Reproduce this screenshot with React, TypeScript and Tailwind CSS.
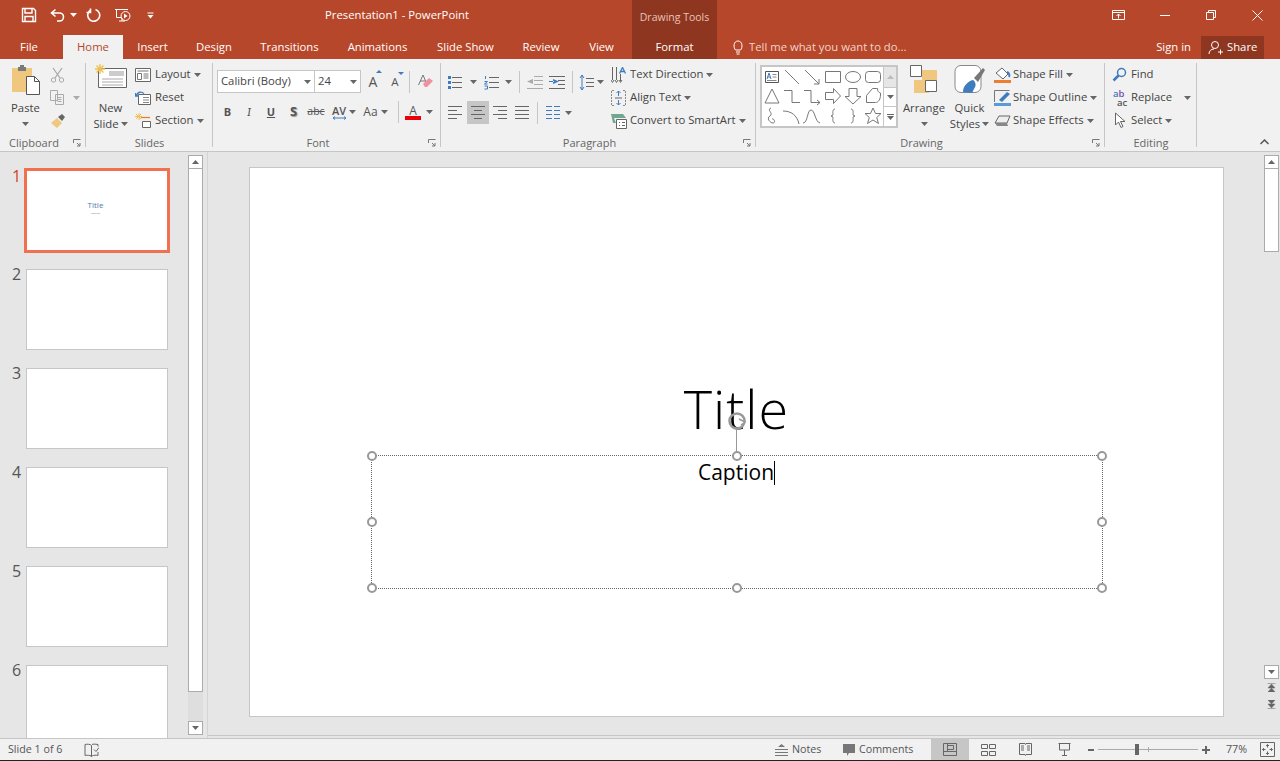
import React from "react";

type P = { children?: React.ReactNode; w?: number; h?: number; className?: string };
const Ico = ({ children, w = 16, h = 16, className = "" }: P) => (
  <svg width={w} height={h} viewBox={`0 0 ${w} ${h}`} fill="none" stroke="#666" strokeWidth={1} className={`shrink-0 block ${className}`}>
    {children}
  </svg>
);
const Caret = ({ className = "", color = "#666" }: { className?: string; color?: string }) => (
  <svg width={7} height={4} viewBox="0 0 7 4" className={`shrink-0 inline-block ${className}`}><path d="M0 0h7L3.5 4z" fill={color} /></svg>
);

const tabs: [string, string][] = [
  ["Insert", "w-[59px]"], ["Design", "w-[64px]"], ["Transitions", "w-[87px]"], ["Animations", "w-[89px]"],
  ["Slide Show", "w-[87px]"], ["Review", "w-[64px]"], ["View", "w-[57px]"],
];

function Header() {
  return (
    <div className="grid grid-cols-[632px_85px_1fr] grid-rows-[35px_24px] bg-[#b7472a] text-white text-[11.3px] leading-none">
      <div className="flex items-center pb-[5px]">
        <Ico w={16} h={16} className="ml-[21px]">
          <path d="M1.5 1.5h11l2 2v11h-13z" stroke="#fff" strokeWidth={1.4} /><path d="M4 2v4h7V2M4 14V9.5h8V14" stroke="#fff" strokeWidth={1.4} />
        </Ico>
        <Ico w={16} h={14} className="ml-[13px]">
          <path d="M5.5 1.5L1.5 5l4 3.5M2 5h7.5a4 4 0 0 1 0 8H7" stroke="#fff" strokeWidth={1.6} />
        </Ico>
        <Caret color="#fff" className="ml-[4px]" />
        <Ico w={15} h={14} className="ml-[9px]">
          <path d="M9.5 1.5A6 6 0 1 1 4 2.5M4.5 0.5v4h-4" stroke="#fff" strokeWidth={1.6} />
        </Ico>
        <Ico w={18} h={18} className="ml-[13px] mt-[3px]">
          <path d="M1 1.5h13M2.5 2v7.5h5M5 13h6M8 10v3" stroke="#fff" /><circle cx={11.5} cy={8} r={4.5} stroke="#fff" /><path d="M10 5.5v5l3.5-2.5z" fill="#fff" stroke="none" />
        </Ico>
        <Ico w={7} h={7} className="ml-[15px]">
          <path d="M0.5 1h6" stroke="#fff" /><path d="M0.5 3h6L3.5 6.5z" fill="#fff" stroke="none" />
        </Ico>
        <span className="ml-[171px] whitespace-nowrap">Presentation1 - PowerPoint</span>
      </div>
      <div className="row-span-2 bg-[#8f3620] flex flex-col items-center">
        <div className="h-[35px] flex items-center pb-[1px] text-[10.5px] text-[#e8c4b8]">Drawing Tools</div>
        <div className="h-[24px] flex items-center">Format</div>
      </div>
      <div className="flex items-start justify-end">
        <div className="w-[46px] h-[30px] flex items-center justify-center">
          <Ico w={14} h={11}><path d="M.5.5h12v9H.5zM.5 2.5h12M6.5 8.5V4M4.5 6l2-2 2 2" stroke="#fff" /></Ico>
        </div>
        <div className="w-[46px] h-[30px] flex items-center justify-center"><div className="w-[10px] h-px bg-white" /></div>
        <div className="w-[46px] h-[30px] flex items-center justify-center">
          <Ico w={10} h={10}><path d="M.5 2.5h7v7h-7zM2.5 2.5v-2h7v7h-2" stroke="#fff" /></Ico>
        </div>
        <div className="w-[46px] h-[30px] flex items-center justify-center">
          <Ico w={11} h={11}><path d="M.5.5l10 10M10.5.5l-10 10" stroke="#fff" /></Ico>
        </div>
      </div>
      <div className="flex items-center">
        <div className="w-[58px] text-center">File</div>
        <div className="ml-[5px] w-[60px] h-full bg-[#f1f1f1] text-[#b7472a] flex items-center justify-center">Home</div>
        {tabs.map(([t, w]) => <div key={t} className={`${w} text-center`}>{t}</div>)}
      </div>
      <div className="flex items-center">
        <Ico w={12} h={15} className="ml-[15px]">
          <path d="M3.5 10C1 7.5 1.500 1 6 1s5 6.500 2.500 9zM4 12h4M4.500 14h3" stroke="#fff" />
        </Ico>
        <span className="ml-[5px] text-[#f0d5cc] whitespace-nowrap">Tell me what you want to do...</span>
        <span className="ml-auto whitespace-nowrap">Sign in</span>
        <div className="ml-[10px] mr-[16px] w-[63px] h-[23px] bg-[#8f3620] flex items-center pl-[7px]">
          <Ico w={15} h={15}><circle cx={7} cy={5} r={3.500} stroke="#fff" /><path d="M1 14c0-3 2-5 5-5M10 12h5M12.500 9.500v5" stroke="#fff" /></Ico>
          <span className="ml-[4px]">Share</span>
        </div>
      </div>
    </div>
  );
}

const Group = ({ w, label, launcher, children }: { w: string; label: string; launcher?: boolean; children: React.ReactNode }) => (
  <div className={`${w} relative shrink-0 flex flex-col`}>
    <div className="h-[77px] flex pt-[4px]">{children}</div>
    <div className={`h-[15px] flex items-center justify-center text-[#666] text-[11px] ${launcher ? "pr-[18px]" : ""}`}>{label}</div>
    <div className="absolute right-0 top-[4px] bottom-[4px] w-px bg-[#c6c6c6]" />
    {launcher && (
      <div className="absolute right-[5px] bottom-[4px]">
        <Ico w={8} h={8}><path d="M.5 4V.5H7.500M4 4l3 3M4 7h3V4" stroke="#777" /></Ico>
      </div>
    )}
  </div>
);

const Row = ({ icon, label, caret = true, gap = 4, caretClass = "ml-[3px]" }: { icon: React.ReactNode; label: string; caret?: boolean; gap?: number; caretClass?: string }) => (
  <div className="h-[23px] flex items-center whitespace-nowrap">
    {icon}
    <span style={{ marginLeft: gap }}>{label}</span>
    {caret && <Caret className={caretClass} />}
  </div>
);

function Clipboard() {
  return (
    <Group w="w-[86px]" label="Clipboard" launcher>
      <div className="w-[50px] flex flex-col items-center pl-[1px]">
        <Ico w={30} h={32} className="mt-[1px]">
          <path d="M1 4h20v24H1z" fill="#efc77f" stroke="none" />
          <path d="M7 3h8v4H7z" fill="#7a7a7a" stroke="none" /><path d="M9 1h4v3H9z" fill="#7a7a7a" stroke="none" />
          <path d="M15.500 12.500h8l5 5v13h-13z" fill="#fff" stroke="#555" /><path d="M23.500 12.500v5h5" stroke="#555" />
        </Ico>
        <div className="mt-[4px] leading-[16px]">Paste</div>
        <Caret className="mt-[6px]" />
      </div>
      <div className="flex flex-col">
        <div className="h-[23px] flex items-center">
          <Ico w={15} h={16}><path d="M3 1l7 10M12 1L5 11" stroke="#aaa" strokeWidth={1.300} /><circle cx={3.500} cy={13} r={2.200} stroke="#aaa" /><circle cx={11.500} cy={13} r={2.200} stroke="#aaa" /></Ico>
        </div>
        <div className="h-[23px] flex items-center">
          <Ico w={15} h={15}><path d="M.5.5h7v10h-7zM5.500 4.500h8v10h-8zM7.500 7.500h4M7.500 9.500h4M7.500 11.500h4" stroke="#aaa" fill="#f1f1f1" /></Ico>
          <Caret color="#aaa" className="ml-[8px]" />
        </div>
        <div className="h-[23px] flex items-center">
          <Ico w={16} h={14}>
            <path d="M1 9l6-5 5 5-5 5z" fill="#efc77f" stroke="none" /><path d="M8 3l4-3 3 3-3 4z" fill="#666" stroke="none" />
          </Ico>
        </div>
      </div>
    </Group>
  );
}

const Sun = () => <path d="M5 0v10M0 5h10M1.500 1.500l7 7M8.500 1.500l-7 7" stroke="#efc04f" strokeWidth={1.300} />;

function Slides() {
  return (
    <Group w="w-[127px]" label="Slides">
      <div className="w-[49px] flex flex-col items-center">
        <Ico w={32} h={26} className="mt-[1px] ml-[1px]">
          <path d="M3.500 4.500h28v19h-28z" fill="#fff" stroke="#666" />
          <path d="M14 7h15v5H14z" fill="#ccc" stroke="none" /><path d="M7 15h21M7 18h21M7 21h21" stroke="#aaa" />
          <Sun />
        </Ico>
        <div className="mt-[10px] leading-[16px]">New</div>
        <div className="leading-[16px] flex items-center">Slide<Caret className="ml-[2px]" /></div>
      </div>
      <div className="flex flex-col">
        <Row label="Layout" icon={<Ico w={16} h={14}><path d="M.5.5h15v13H.5z" fill="#fff" /><path d="M2.500 3h11M2.500 5.500h4v6h-4zM8.500 6h5M8.500 8h5M8.500 10h5" stroke="#777" /></Ico>} />
        <Row label="Reset" caret={false} icon={<Ico w={16} h={14}><path d="M3.500 3.500h12v10h-12z" fill="#fff" /><path d="M8 6.500h6M8 9h6M8 11.500h6" stroke="#888" /><path d="M9 2.500C6 0 2.500 1 1.500 4.500M.5 2v3h3" stroke="#3f7cbf" strokeWidth={1.300} /></Ico>} />
        <Row label="Section" icon={<Ico w={16} h={15}><path d="M4 0v7M0 3.500h7M1 1l5 5M6 1L1 6" stroke="#efc04f" /><path d="M6 4.500h9" stroke="#ed7d31" strokeWidth={1.300} /><path d="M7.500 8.500h8v6h-8z" fill="#fff" /></Ico>} />
      </div>
    </Group>
  );
}

const ComboBox = ({ w, label }: { w: string; label: string }) => (
  <div className={`${w} h-[23px] bg-white border border-[#c6c6c6] flex items-center justify-between pl-[3px] pr-[3px] whitespace-nowrap overflow-hidden`}>
    <span>{label}</span><Caret />
  </div>
);
const Btn = ({ w = "w-[22px]", children }: { w?: string; children: React.ReactNode }) => (
  <div className={`${w} h-[22px] flex items-center justify-center shrink-0`}>{children}</div>
);
const Sep = ({ h = "h-[22px]", className = "" }: { h?: string; className?: string }) => <div className={`w-px ${h} bg-[#c6c6c6] shrink-0 ${className}`} />;

function Font() {
  return (
    <Group w="w-[228px]" label="Font" launcher>
      <div className="flex flex-col pl-[4px]">
        <div className="flex items-center mt-[7px]">
          <ComboBox w="w-[98px]" label="Calibri (Body)" />
          <ComboBox w="w-[47px] ml-[-1px]" label="24" />
          <Btn w="w-[22px] ml-[1px]"><span className="text-[14px] text-[#555] relative">A<span className="absolute -top-[1px] -right-[5px] w-0 h-0 border-x-[3px] border-x-transparent border-b-[3px] border-b-[#3f7cbf]" /></span></Btn>
          <Btn><span className="text-[11.500px] text-[#555] relative">A<span className="absolute -top-[1px] -right-[5px] w-0 h-0 border-x-[3px] border-x-transparent border-t-[3px] border-t-[#3f7cbf]" /></span></Btn>
          <Sep className="ml-[3px]" />
          <Btn w="w-[30px]">
            <Ico w={16} h={15}><path d="M6 1L1.500 11M6 1l3 7M3 7h5" stroke="#777" /><path d="M6 10l6-6 4 3-6 6H8z" fill="#ef8f9f" stroke="none" /></Ico>
          </Btn>
        </div>
        <div className="flex items-center mt-[8px] text-[#555]">
          <Btn w="w-[21px]"><b className="font-bold text-[11px]">B</b></Btn>
          <Btn><i className="text-[12px] font-serif">I</i></Btn>
          <Btn w="w-[22px]"><span className="underline text-[11px] font-bold">U</span></Btn>
          <Btn w="w-[23px]"><b className="text-[13px] [text-shadow:1px_1px_1px_#999]">S</b></Btn>
          <Btn w="w-[22px]"><span className="line-through text-[10.500px]">abc</span></Btn>
          <Btn w="w-[33px]">
            <div className="flex items-center">
              <div className="flex flex-col items-center leading-[11px]">
                <span className="text-[11px] font-semibold">AV</span>
                <Ico w={15} h={4}><path d="M1 2h13M1 2l2-1.500M1 2l2 1.500M14 2l-2-1.500M14 2l-2 1.500" stroke="#3f7cbf" /></Ico>
              </div>
              <Caret className="ml-[2px]" />
            </div>
          </Btn>
          <Btn w="w-[31px]"><span className="text-[12px]">Aa</span><Caret className="ml-[3px]" /></Btn>
          <Sep className="ml-[7px]" />
          <div className="ml-[6px] w-[16px] flex flex-col items-center pt-[1px]">
            <span className="text-[12px] leading-[11px] font-medium">A</span>
            <div className="w-[16px] h-[4px] bg-[#e8000b]" />
          </div>
          <Caret className="ml-[5px]" />
        </div>
      </div>
    </Group>
  );
}

const L = ({ d, c = "#666" }: { d: string; c?: string }) => <path d={d} stroke={c} />;

function Paragraph() {
  return (
    <Group w="w-[315px]" label="Paragraph" launcher>
      <div className="flex flex-col pl-[7px] w-[170px]">
        <div className="flex items-center mt-[8px] h-[22px]">
          <Ico w={15} h={15}><L d="M4 2.500h10M4 7.500h10M4 12.500h10" /><path d="M0 1h3v3H0zM0 6h3v3H0zM0 11h3v3H0z" fill="#3f7cbf" stroke="none" /></Ico>
          <Caret className="ml-[7px]" />
          <Ico w={15} h={15} className="ml-[7px]"><L d="M5 2.500h10M5 7.500h10M5 12.500h10" /><L d="M1.500 1v3M.5 6.500h3L.5 9h3M.5 11h3v3h-3" c="#3f7cbf" /></Ico>
          <Caret className="ml-[6px]" />
          <Sep className="ml-[7px]" />
          <Ico w={16} h={13} className="ml-[7px]"><L d="M7 .5h9M7 4.500h9M7 8.500h9M0 12.500h16" c="#aaa" /><path d="M6 3v5L0 5.500z" fill="#aaa" stroke="none" /></Ico>
          <Ico w={16} h={13} className="ml-[6px]"><L d="M0 .5h16M9 4.500h7M9 8.500h7M0 12.500h16" /><path d="M4 3v5l6-2.500z M0 5h5v1H0z" fill="#3f7cbf" stroke="none" /></Ico>
          <Sep className="ml-[7px]" />
          <Ico w={15} h={17} className="ml-[6px]"><L d="M7 4.500h8M7 8.500h8M7 12.500h8" /><path d="M3 1v15M1 4l2-3 2 3M1 13l2 3 2-3" stroke="#3f7cbf" /></Ico>
          <Caret className="ml-[3px]" />
        </div>
        <div className="flex items-center mt-[8px] h-[23px]">
          <div className="w-[19px] flex"><Ico w={14} h={13}><L d="M0 .5h14M0 4.500h9M0 8.500h14M0 12.500h9" /></Ico></div>
          <div className="w-[22px] h-[23px] bg-[#c6c6c6] flex items-center justify-center"><Ico w={14} h={13}><L d="M0 .5h14M3 4.500h8M0 8.500h14M3 12.500h8" /></Ico></div>
          <div className="w-[18px] flex justify-end"><Ico w={14} h={13}><L d="M0 .5h14M5 4.500h9M0 8.500h14M5 12.500h9" /></Ico></div>
          <div className="w-[22px] flex justify-end"><Ico w={14} h={13}><L d="M0 .5h14M0 4.500h14M0 8.500h14M0 12.500h14" /></Ico></div>
          <Sep className="ml-[8px]" />
          <Ico w={14} h={13} className="ml-[8px]"><L d="M0 .5h6M8 .5h6M0 4.500h6M8 4.500h6M0 8.500h6M8 8.500h6M0 12.500h6M8 12.500h6" c="#3f7cbf" /></Ico>
          <Caret className="ml-[5px]" />
        </div>
      </div>
      <div className="flex flex-col">
        <Row label="Text Direction" gap={4} icon={<Ico w={15} h={16}><L d="M1.500 0v13M5.500 0v13M9.500 7v7" /><path d="M0 13l1.500 2.500L3 13M4 13l1.500 2.500L7 13M8 13l1.500 2.500L11 13" stroke="#666" /><path d="M8.500 6.500L11.500.5l3 6M9.500 4.500h4" stroke="#3f7cbf" strokeWidth={1.300} /></Ico>} />
        <Row label="Align Text" gap={4} icon={<Ico w={15} h={16}><path d="M3 .5H.5v15H3M12 .5h2.500v15H12" stroke="#888" strokeDasharray="2 1" /><path d="M7.500 1v5M5.500 3l2-2 2 2M7.500 10v5M5.500 13l2 2 2-2" stroke="#3f7cbf" /><L d="M4 8h7" /></Ico>} />
        <Row label="Convert to SmartArt" gap={3} icon={<Ico w={16} h={16}><path d="M0 1h12l3 4H3l2 5H2z" fill="#6fa88f" stroke="none" /><path d="M5.500 6.500h10v9h-10z" fill="#fff" /><L d="M8 9.500h1M11 9.500h3M8 12.500h1M11 12.500h3" /></Ico>} />
      </div>
    </Group>
  );
}

const S = "#777";
const shapes: React.ReactNode[] = [
  <><path d="M3.500 4.500h13v11h-13z" stroke="#555" fill="#fff" /><path d="M5 12l2-6 2 6M5.700 10h2.600" stroke="#3f7cbf" /><path d="M10.500 7.500h4M10.500 10h4M5 13.500h9.500" stroke="#888" /></>,
  <path d="M3 3l14 14" stroke={S} />,
  <path d="M3 3l14 14M17 12v5h-5" stroke={S} />,
  <path d="M2.500 4.500h15v11h-15z" stroke={S} />,
  <ellipse cx={10} cy={10} rx={7.500} ry={5.500} stroke={S} />,
  <rect x={2.500} y={4.500} width={15} height={11} rx={3} stroke={S} />,
  <path d="M10 3l7 14H3z" stroke={S} />,
  <path d="M2 4.500h8v12h8" stroke={S} />,
  <path d="M2 4.500h7v12h9M15 14l3 2.500-3 2.500" stroke={S} />,
  <path d="M2.500 6.500h8v-4l7 7.500-7 7.500v-4h-8z" stroke={S} />,
  <path d="M6 2.500h8v8h4l-8 7.500-8-7.500h4z" stroke={S} />,
  <path d="M3.500 16.500v-7l6-7h5c0 2.500 1 4 3 4.500v2c0 4-2 7.500-5 7.500z" stroke={S} />,
  <path d="M9 2C4 4 12 7 8 10c-4 2 0 7 3 7s1-5-1-4" stroke={S} />,
  <path d="M1 5c8 0 14 4 16 13" stroke={S} />,
  <path d="M1 17C6 17 5 4 9 4s4 12 9 13" stroke={S} />,
  <path d="M12 3c-3 0-2 5-2 6l-2 1 2 1c0 1-1 6 2 6" stroke={S} />,
  <path d="M8 3c3 0 2 5 2 6l2 1-2 1c0 1 1 6-2 6" stroke={S} />,
  <path d="M10 2l2.500 5.500H18l-4.300 4 1.800 6-5.500-3.500L4.500 17.500l1.800-6-4.300-4h5.500z" stroke={S} />,
];

function Drawing() {
  return (
    <Group w="w-[349px]" label="Drawing" launcher>
      <div className="ml-[4px] mt-[2px] w-[138px] h-[63px] bg-white border-2 border-[#c6c6c6] flex shrink-0">
        <div className="w-[121px] grid grid-cols-6 auto-rows-[19.600px]">
          {shapes.map((s, i) => <div key={i} className="flex items-center justify-center"><Ico w={20} h={20}>{s}</Ico></div>)}
        </div>
        <div className="w-[13px] flex flex-col border-l border-[#c6c6c6]">
          <div className="h-[21px] bg-[#e6e6e6] flex items-center justify-center border-b border-[#c6c6c6]"><Caret color="#bbb" className="rotate-180" /></div>
          <div className="h-[19px] flex items-center justify-center border-b border-[#c6c6c6]"><Caret /></div>
          <div className="flex-1 flex flex-col items-center justify-center"><div className="w-[7px] h-px bg-[#666] mb-[1px]" /><Caret /></div>
        </div>
      </div>
      <div className="ml-[1px] w-[50px] flex flex-col items-center shrink-0">
        <Ico w={28} h={28} className="mt-[2px]">
          <path d="M4 15h15v14H4z M12 5h15v14H12z" fill="#efc77f" stroke="none" />
          <path d="M.5.5h11v11H.5zM15.500 15.500h11v11h-11z" fill="#fff" stroke="#666" />
        </Ico>
        <div className="mt-[7px] leading-[16px]">Arrange</div>
        <Caret className="mt-[6px]" />
      </div>
      <div className="ml-[-2px] w-[45px] flex flex-col items-center shrink-0">
        <Ico w={32} h={30} className="mt-[2px]">
          <rect x={1} y={.5} width={26} height={27} rx={6} fill="#fff" stroke="#888" />
          <path d="M20 13l9-10 2 2-7 12z" fill="#777" stroke="none" />
          <path d="M9 27c0-6 5-11 10-12 3 2 3 6 2 7l-3 6z" fill="#3f7cbf" stroke="none" />
        </Ico>
        <div className="mt-[5px] leading-[16px]">Quick</div>
        <div className="leading-[16px] flex items-center whitespace-nowrap">Styles<Caret className="ml-[2px]" /></div>
      </div>
      <div className="ml-[2px] flex flex-col shrink-0">
        <Row label="Shape Fill" gap={2} icon={<Ico w={17} h={16}><path d="M2 6l6-5 6 6-5 5z" fill="#fff" stroke="#666" /><path d="M13 5c2 1 3 3 2 5" stroke="#3f7cbf" strokeWidth={2} /><path d="M0 13h17v3H0z" fill="#ed7d31" stroke="none" /></Ico>} />
        <Row label="Shape Outline" gap={2} icon={<Ico w={17} h={16}><path d="M.5 12V.5h15" stroke="#777" /><path d="M5 10L13 2l3 2-8 8z" fill="#3f7cbf" stroke="none" /><path d="M0 13h17v3H0z" fill="#5b9bd5" stroke="none" /></Ico>} />
        <Row label="Shape Effects" gap={2} icon={<Ico w={17} h={14}><path d="M1 9l4-7h11l-3 7z" fill="#eee" stroke="#666" /><path d="M1 9h12l1 3H3z" fill="#888" stroke="none" /></Ico>} />
      </div>
    </Group>
  );
}

function Editing() {
  return (
    <Group w="w-[92px]" label="Editing">
      <div className="flex flex-col pl-[7px]">
        <Row label="Find" caret={false} gap={4} icon={<Ico w={15} h={15}><circle cx={9.500} cy={5.500} r={4} stroke="#3f7cbf" strokeWidth={1.500} /><path d="M6.500 8.500l-5 5" stroke="#3f7cbf" strokeWidth={2.500} /></Ico>} />
        <Row label="Replace" gap={4} caretClass="ml-[12px]" icon={
          <div className="w-[15px] h-[18px] leading-[9px] text-[9.500px] font-semibold flex flex-col">
            <div className="h-[9px] pl-[1px]"><span className="text-[#3f7cbf]">a</span><span className="text-[#7b4fa6]">b</span></div>
            <div className="h-[9px] pl-[5px] text-[#555]">ac</div>
          </div>} />
        <Row label="Select" gap={4} icon={<Ico w={15} h={17}><path d="M3.500 1v12l3-3 2.500 5.500 2-1L8.500 9.500H13z" stroke="#666" fill="#fff" /></Ico>} />
      </div>
    </Group>
  );
}

function Ribbon() {
  return (
    <div className="h-[93px] bg-[#f1f1f1] border-b border-[#c6c6c6] flex text-[#444] text-[11.3px] relative">
      <Clipboard /><Slides /><Font /><Paragraph /><Drawing /><Editing />
      <div className="ml-auto mr-[11px] self-end mb-[6px]"><Ico w={9} h={6}><path d="M.5 5l4-4 4 4" stroke="#555" strokeWidth={1.500} /></Ico></div>
    </div>
  );
}

function ThumbList() {
  return (
    <div className="w-[188px] h-full overflow-hidden pt-[16px] shrink-0">
      <div className="h-[101px] flex items-start">
        <div className="w-[24px] pl-[12px] text-[16px] leading-[16px] text-[#d24726]">1</div>
        <div className="w-[146px] h-[85px] border-[3px] border-[#f0704f] bg-white flex flex-col items-center pt-[30px] pr-[3px]">
          <div className="text-[8px] leading-[8px] text-[#4f7aa5]">Title</div>
          <div className="text-[2.500px] leading-[4px] mt-[2px] text-[#777]">Caption</div>
        </div>
      </div>
      {[2, 3, 4, 5, 6].map((n) => (
        <div key={n} className="h-[99px] flex items-start">
          <div className="w-[26px] pl-[12px] text-[16px] leading-[11px] text-[#555]">{n}</div>
          <div className="w-[142px] h-[81px] bg-white border border-[#c6c6c6] shrink-0" />
        </div>
      ))}
    </div>
  );
}

const ScrollBtn = ({ up, white = true, className = "" }: { up?: boolean; white?: boolean; className?: string }) => (
  <div className={`h-[14px] w-full flex items-center justify-center border border-[#ababab] ${white ? "bg-white" : ""} ${className}`}>
    <Caret className={up ? "rotate-180" : ""} />
  </div>
);

function ThumbScroll() {
  return (
    <div className="w-[15px] h-full pt-[3px] pb-[3px] flex flex-col shrink-0">
      <ScrollBtn up />
      <div className="h-[523px] bg-white border-x border-b border-[#ababab]" />
      <div className="flex-1 bg-[#dedede]" />
      <ScrollBtn />
    </div>
  );
}

const handles = [
  "left-[-5px] top-[-5px]", "left-1/2 -ml-[5px] top-[-5px]", "right-[-5px] top-[-5px]",
  "left-[-5px] top-1/2 -mt-[5px]", "right-[-5px] top-1/2 -mt-[5px]",
  "left-[-5px] bottom-[-5px]", "left-1/2 -ml-[5px] bottom-[-5px]", "right-[-5px] bottom-[-5px]",
];

function Slide() {
  return (
    <div className="w-[975px] h-[550px] bg-white border border-[#c6c6c6] flex flex-col items-center text-black shrink-0">
      <div className="mt-[199px] h-[82px] flex items-center font-light text-[54px] leading-none tracking-[1px]">Title</div>
      <div className="relative mt-[6px] w-[732px] h-[134px] border border-dotted border-[#666] flex justify-center">
        <div className="text-[21px] leading-[30px] pt-[1px] flex">
          <span>Caption</span><span className="w-px h-[24px] bg-black mt-[4px]" />
        </div>
        {handles.map((h) => <div key={h} className={`absolute ${h} w-[10px] h-[10px] rounded-full bg-white border-2 border-[#999]`} />)}
        <div className="absolute left-1/2 -top-[46px] -ml-[11px] w-[22px] h-[42px] flex flex-col items-center">
          <svg width={22} height={22} viewBox="0 0 22 22" fill="none" className="shrink-0">
            <circle cx={11} cy={11} r={7.500} stroke="#999" strokeWidth={2.500} />
            <path d="M13 9l6 3-4 3" stroke="#999" strokeWidth={1.500} fill="#fff" />
          </svg>
          <div className="w-px flex-1 bg-[#999] -mt-[3px]" />
        </div>
      </div>
    </div>
  );
}

function RightScroll() {
  return (
    <div className="w-[16px] h-full pt-[3px] pr-[1px] flex flex-col shrink-0">
      <ScrollBtn up />
      <div className="h-[83px] bg-white border-x border-b border-[#ababab]" />
      <div className="h-[413px]" />
      <ScrollBtn />
      <div className="h-[17px] flex items-center justify-center"><Ico w={9} h={9}><path d="M.5.5h8M1 5l3.500-4L8 5zM1 9l3.500-4L8 9z" fill="#666" stroke="#666" strokeWidth={.5} /></Ico></div>
      <div className="h-[17px] flex items-center justify-center"><Ico w={9} h={9}><path d="M.5 8.500h8M1 0l3.500 4L8 0zM1 4l3.500 4L8 4z" fill="#666" stroke="#666" strokeWidth={.5} /></Ico></div>
    </div>
  );
}

function Main() {
  return (
    <div className="h-[586px] flex bg-[#e6e6e6] overflow-hidden">
      <ThumbList />
      <ThumbScroll />
      <div className="ml-[4px] flex-1 border-l border-[#d4d4d4] flex flex-col">
        <div className="flex-1 flex">
          <div className="flex-1 min-w-0 pl-[41px] pt-[15px]"><Slide /></div>
          <RightScroll />
        </div>
        <div className="h-[3px] border-t border-[#c6c6c6]" />
      </div>
    </div>
  );
}

function Status() {
  return (
    <div className="h-[23px] bg-[#f1f1f1] border-t border-[#c6c6c6] border-b border-b-[#222] flex items-center text-[10.7px] text-[#555] whitespace-nowrap">
      <span className="ml-[8px] w-[76px]">Slide 1 of 6</span>
      <Ico w={15} h={14}><path d="M7.500 2.500C6 1 3 1 1 1.500v11c2-.5 5-.5 6.500 1V2.500zM7.500 13.500L7 12M10 6.500l2 2 3-4M8 1.500c1-.5 3-.5 6 0v2M14 9v3.500c-2-.5-4-.5-6 .5" /></Ico>
      <Ico w={13} h={12} className="ml-[676px]"><path d="M0 11.500h13M0 8.500h13M0 5.500h13" stroke="#777" /><path d="M6.500 0L10 3H3z" fill="#777" stroke="none" /></Ico>
      <span className="ml-[4px] w-[51px]">Notes</span>
      <Ico w={12} h={12}><path d="M0 0h12v9H6l-2 3V9H0z" fill="#777" stroke="none" /></Ico>
      <span className="ml-[4px] w-[72px]">Comments</span>
      <div className="w-[38px] h-full bg-[#c6c6c6] flex items-center justify-center">
        <Ico w={14} h={13}><path d="M.5.5h13v12H.5zM4.500.5v8h9M4.500 6.500h6v-4h-6M.5 8.500h4" /></Ico>
      </div>
      <div className="w-[38px] flex justify-center"><Ico w={15} h={12}><path d="M.5.5h6v4h-6zM8.500.5h6v4h-6zM.5 7.500h6v4h-6zM8.500 7.500h6v4h-6z" /></Ico></div>
      <div className="w-[37px] flex justify-center"><Ico w={13} h={13}><path d="M.5.5h5.500l.5 1 .5-1h5.500v11H7l-.5 1-.5-1H.5zM2 3h3M2 5h3M2 7h3M8 3h3M8 5h3M8 7h3" /></Ico></div>
      <div className="w-[40px] flex justify-center"><Ico w={13} h={13}><path d="M.5.5h12M1.500 1v6h10V1M6.500 7v5M4 12.500h5" /></Ico></div>
      <div className="ml-[4px] w-[6px] h-[2px] bg-[#666]" />
      <div className="ml-[4px] w-[100px] h-px bg-[#aaa] relative">
        <div className="absolute left-[37px] top-[-5px] w-[4px] h-[11px] bg-[#666]" />
        <div className="absolute left-[50px] top-[-2px] w-px h-[5px] bg-[#aaa]" />
      </div>
      <Ico w={8} h={8} className="ml-[4px]"><path d="M4 0v8M0 4h8" stroke="#666" strokeWidth={2} /></Ico>
      <span className="ml-[16px] w-[34px]">77%</span>
      <Ico w={16} h={15}><path d="M.5.5h14v14H.5z" /><path d="M7.500 2.500v3M6 4l1.500-1.500L9 4M7.500 12.500v-3M6 11l1.500 1.500L9 11M2.500 7.500h3M4 6L2.500 7.500 4 9M12.500 7.500h-3M11 6l1.500 1.500L11 9" /></Ico>
    </div>
  );
}

export default function App() {
  return (
    <div className="w-[1280px] h-[761px] overflow-hidden bg-[#e6e6e6] font-['Open_Sans',sans-serif]">
      <Header />
      <Ribbon />
      <Main />
      <Status />
    </div>
  );
}
